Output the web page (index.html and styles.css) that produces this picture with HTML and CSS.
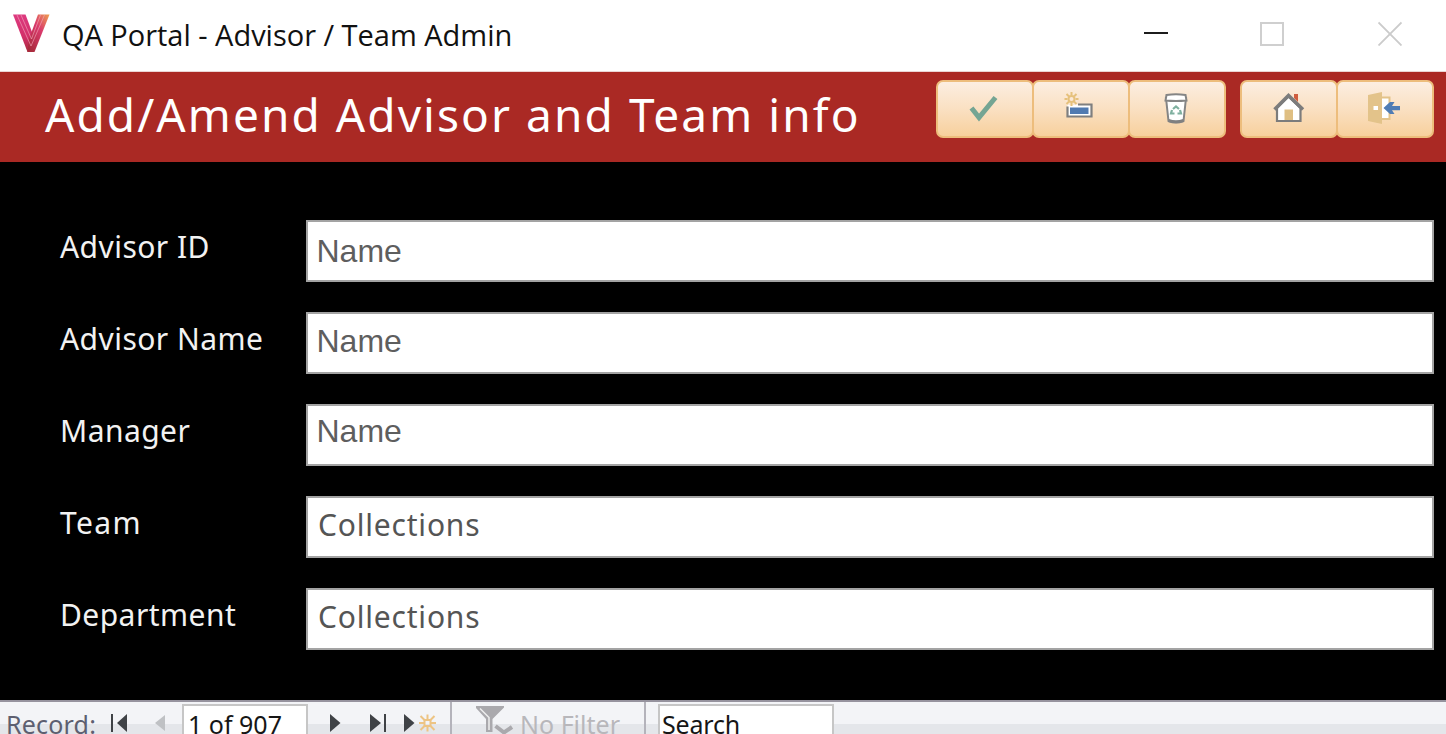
FILE: index.html
```html
<!DOCTYPE html>
<html lang="en">
<head>
<meta charset="utf-8">
<title>QA Portal - Advisor / Team Admin</title>
<link rel="stylesheet" href="styles.css">
</head>
<body>
<div class="window">
  <div class="titlebar">
    <svg class="logo" width="38" height="40" viewBox="0 0 38 40">
      <defs>
        <linearGradient id="lg" x1="0" y1="0" x2="0" y2="1"><stop offset="0" stop-color="#dd3a80"/><stop offset=".6" stop-color="#d22f68"/><stop offset="1" stop-color="#a82b3c"/></linearGradient>
        <linearGradient id="rg" x1="1" y1="0" x2="0.2" y2="1"><stop offset="0" stop-color="#eea050"/><stop offset=".45" stop-color="#d93a6c"/><stop offset="1" stop-color="#a82b3c"/></linearGradient>
      </defs>
      <path d="M0 0.500H12.500L20.500 22L17 38H14.500Z" fill="url(#lg)"/>
      <path d="M25 0.500H36.500L21.500 38H14.500L16 25Z" fill="url(#rg)"/>
      <path d="M4 1L18 32L31.500 1M8 1L18.500 25L27.500 1" fill="none" stroke="#f3a9bd" stroke-width="1" opacity=".6"/>
    </svg>
    <span class="caption">QA Portal - Advisor / Team Admin</span>
    <div class="controls">
      <svg width="24" height="26" viewBox="0 0 24 26"><path d="M0 13H24" stroke="#1c1c1c" stroke-width="2"/></svg>
      <svg class="maximize" width="24" height="26" viewBox="0 0 24 26"><rect x="1" y="3" width="22" height="22" fill="none" stroke="#cfcfcf" stroke-width="2"/></svg>
      <svg width="24" height="26" viewBox="0 0 24 26"><path d="M0.500 2.500L23.500 25.500M23.500 2.500L0.500 25.500" stroke="#cbcbcb" stroke-width="1.800"/></svg>
    </div>
  </div>

  <div class="header">
    <h1 class="heading">Add/Amend Advisor and Team info</h1>
    <div class="group records">
      <button class="btn"><svg width="48" height="40" viewBox="0 0 48 40"><path d="M11.500 19L19 28.500L35.500 8.500" fill="none" stroke="#74a593" stroke-width="5"/></svg></button>
      <button class="btn"><svg width="48" height="40" viewBox="0 0 48 40">
        <rect x="11.500" y="15.500" width="24" height="12" fill="#fff"/><path d="M22 15.500H35.500V27.500H11.500V17.500" fill="none" stroke="#7f7f7f" stroke-width="2.200"/>
        <rect x="14" y="18.500" width="18.500" height="6.500" fill="#507ab1"/>
        <circle cx="15.500" cy="10" r="6.500" fill="#fbe8d6"/><g stroke="#e6c17c" fill="none" stroke-width="2"><circle cx="15.500" cy="10" r="3"/><path d="M15.500 3V6M15.500 14V17M8.500 10H11.500M19.500 10H22.500M10.500 5L13 7.500M20.500 5L18 7.500M10.500 15L13 12.500M20.500 15L18 12.500"/></g></svg></button>
      <button class="btn"><svg width="48" height="40" viewBox="0 0 48 40">
        <path d="M14 9L16.500 32Q24 35 31.500 32L34 9Z" fill="#fff" stroke="#858585" stroke-width="2"/>
        <path d="M16.500 31.500Q24 34 31.500 31.500" fill="none" stroke="#808080" stroke-width="3"/>
        <path d="M14.500 6Q24 4.500 33.500 6L34.500 11.500Q24 12.500 13.500 11.500Z" fill="#fff" stroke="#858585" stroke-width="2"/>
        <path d="M21 20L24 17.500L27 20M28 21L29 24.500H25.500M22.500 24.500H19L20 21" fill="none" stroke="#7fb09f" stroke-width="2.200"/></svg></button>
    </div>
    <div class="group">
      <button class="btn"><svg width="48" height="40" viewBox="0 0 48 40">
        <path d="M29 5H33V13L29 9Z" fill="#d05d3e"/>
        <path d="M12 32V19L23.500 7.500L35.500 19V32Z" fill="#fff" stroke="#7c7c7c" stroke-width="2.200"/>
        <path d="M9.500 20.500L23.500 6.500L38 20.500" fill="none" stroke="#7c7c7c" stroke-width="3.500"/>
        <rect x="19.500" y="20.500" width="8.500" height="10.500" fill="#dfbf83"/></svg></button>
      <button class="btn"><svg width="48" height="40" viewBox="0 0 48 40">
        <path d="M21 8.500H28.500V30H21" fill="#fff" stroke="#e3c38a" stroke-width="2"/>
        <path d="M7 6L21 3V35L7 32Z" fill="#e3c38a"/><rect x="12.500" y="17" width="4.500" height="4" fill="#fff"/>
        <path d="M22.500 19L29 13H33.500L31 17H39V21.300H31L33.500 25H29Z" fill="#4f7cb5"/></svg></button>
    </div>
  </div>

  <div class="form">
    <div class="row"><span class="label">Advisor ID</span><div class="field plain f1">Name</div></div>
    <div class="row"><span class="label">Advisor Name</span><div class="field plain f2">Name</div></div>
    <div class="row"><span class="label">Manager</span><div class="field plain f3">Name</div></div>
    <div class="row"><span class="label team">Team</span><div class="field list">Collections</div></div>
    <div class="row"><span class="label">Department</span><div class="field list">Collections</div></div>
  </div>

  <div class="navbar">
    <span class="record">Record:</span>
    <svg class="nav-left" width="72" height="32" viewBox="0 0 72 32"><path d="M3 12V30" stroke="#3f4246" stroke-width="2"/><path d="M18 12V30L8 21Z" fill="#3f4246"/><path d="M56 13V29L46 21Z" fill="#bfc1c4"/></svg>
    <div class="box position">1 of 907</div>
    <svg class="nav-right" width="142" height="32" viewBox="0 0 142 32"><g fill="#3f4246"><path d="M22 12V30L32.500 21Z"/><path d="M62 12V30L73 21Z"/><path d="M96 12V30L106.500 21Z"/></g><path d="M77 12V30" stroke="#3f4246" stroke-width="2"/>
      <g stroke="#edc484" stroke-width="2" fill="none"><rect x="116.500" y="18" width="6" height="6"/><path d="M119.500 12.500V18M119.500 24V29.500M111 21H116M123 21H128M112.500 14L116.500 18M126.500 14L122.500 18M112.500 28L116.500 24M126.500 28L122.500 24"/></g></svg>
    <div class="filter">
      <svg width="38" height="32" viewBox="0 0 38 32"><path d="M0 4H28V5.500L16.500 17V30H10V17L0 6Z" fill="#aaa9ad"/><path d="M4 6.500L13 15.500V28" stroke="#eee" stroke-width="1.500" fill="none"/><path d="M19.500 24L28 30.500L36 25" fill="none" stroke="#aaa9ad" stroke-width="4"/></svg>
      <span>No Filter</span>
    </div>
    <div class="box search">Search</div>
  </div>
</div>
</body>
</html>
```

FILE: styles.css
```css
* { box-sizing: border-box; }
body { margin: 0; background: #000; font-family: "Noto Sans", sans-serif; overflow: hidden; }
.window { width: 1446px; height: 734px; display: flex; flex-direction: column; overflow: hidden; background: #000; white-space: nowrap; }
.window svg { display: block; flex: none; }

.titlebar { height: 72px; flex: none; display: flex; align-items: flex-start; background: #fff; padding-left: 13px; border-bottom: 1px solid #ead5d4; }
.logo { margin-top: 14px; margin-right: 11px; }
.caption { font-family: "Open Sans", "Noto Sans", sans-serif; font-size: 29px; line-height: 70px; color: #111; letter-spacing: -0.02px; }
.controls { margin-left: auto; display: flex; gap: 93px; padding: 20px 44px 0 0; }
.maximize { margin: 0 1px 0 -1px; }

.header { height: 90px; flex: none; display: flex; align-items: flex-start; background: #aa2924; padding: 0 12px 0 45px; }
.heading { margin: 0; margin-right: auto; font-size: 46px; line-height: 84px; font-weight: 400; color: #fff; letter-spacing: 2.07px; }
.group { display: flex; margin: 8px 0 0 14px; }
.btn { width: 98px; height: 58px; padding: 0; display: flex; align-items: center; justify-content: center; border: 2px solid #edbd7c; border-radius: 7px; background: linear-gradient(#fceee1, #fae0c2 50%, #f7d09d); }
.btn + .btn { margin-left: -2px; }
.records .btn { padding-right: 3px; }

.form { flex: none; height: 538px; padding: 58px 12px 0 60px; display: flex; flex-direction: column; gap: 30px; }
.row { display: flex; height: 62px; }
.label { width: 246px; flex: none; color: #f2f2f2; font-size: 30px; line-height: 53px; letter-spacing: 0.45px; }
.team { letter-spacing: 1.4px; }
.field { flex: 1; border: 2px solid #a3a3a3; background: #fff; color: #5e5e5e; padding-left: 8.500px; }
.plain { font-family: "Liberation Sans", Arial, sans-serif; font-size: 32px; }
.f1 { line-height: 58px; }
.f2 { line-height: 54px; }
.f3 { line-height: 50px; }
.list { font-size: 30px; line-height: 53px; padding-left: 10px; color: #555; letter-spacing: 0.8px; }

.navbar { height: 34px; flex: none; display: flex; align-items: flex-start; border-top: 2px solid #96939e; background: linear-gradient(#f3f4f7 0 22px, #e4e6ea 22px); font-size: 25px; }
.record { width: 109px; padding-left: 6px; line-height: 45px; color: #5d5f70; letter-spacing: 0.2px; }
.nav-left { margin-right: 1px; }
.box { border: 2px solid #c6c6c6; background: #fff; margin-top: 2px; height: 40px; line-height: 36px; color: #161616; }
.position { width: 126px; padding-left: 4px; }
.filter { width: 196px; height: 32px; flex: none; display: flex; gap: 6px; padding-left: 24px; border: solid #b4b3bb; border-width: 0 2px; line-height: 45px; color: #b8b7bb; }
.search { width: 176px; padding-left: 2px; margin-left: 12px; letter-spacing: -0.2px; }
```
